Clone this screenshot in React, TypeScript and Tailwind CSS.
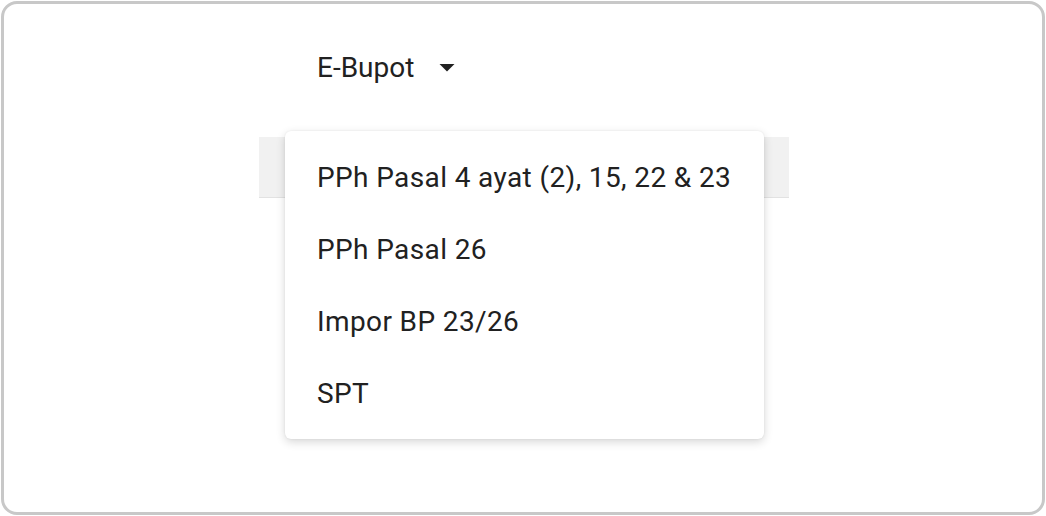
import React from "react";

const items = [
  "PPh Pasal 4 ayat (2), 15, 22 & 23",
  "PPh Pasal 26",
  "Impor BP 23/26",
  "SPT",
];

export default function App() {
  return (
    <div
      className="w-[1046px] h-[516px] bg-white p-[1px]"
      style={{ fontFamily: "Roboto, 'Liberation Sans', sans-serif" }}
    >
      <div className="relative h-[514px] w-[1044px] rounded-[16px] border-[3px] border-[#c8c8c8] bg-white">
        <div className="ml-[255px] w-[530px] pt-[46px]">
          <div className="flex items-center h-[36px] pl-[58px] text-[28px] text-[#212121]">
            <span className="leading-[36px]">E-Bupot</span>
            <svg width="36" height="36" viewBox="0 0 24 24" className="ml-[15px] mt-[-2px]">
              <path d="M7 10l5 5 5-5z" fill="#212121" />
            </svg>
          </div>
          <div className="mt-[51px] h-[61px] bg-[#f1f1f1] border-b border-[#e2e2e2]" />
        </div>

        <div className="absolute left-[281px] top-[127px] w-[479px] rounded-[6px] bg-white pt-[11px] pb-[9px] shadow-[0_3px_10px_rgba(0,0,0,0.16),0_0_2px_rgba(0,0,0,0.08)]">
          {items.map((t) => (
            <div
              key={t}
              className="h-[72px] flex items-center px-[32px] text-[28px] leading-[36px] tracking-[0.38px] text-[#212121]"
            >
              {t}
            </div>
          ))}
        </div>
      </div>
    </div>
  );
}
